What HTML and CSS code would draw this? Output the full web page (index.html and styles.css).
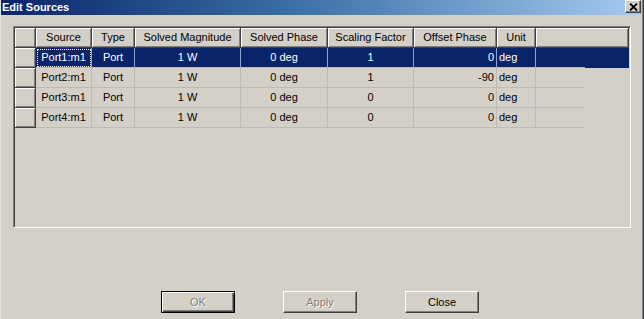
FILE: index.html
```html
<!DOCTYPE html>
<html lang="en">
<head>
    <meta charset="UTF-8">
    <title>Edit Sources</title>
    <link rel="stylesheet" href="styles.css">
</head>
<body>
<div class="window">
    <div class="titlebar">
        <span class="title">Edit Sources</span>
        <span class="close">
            <svg width="9" height="8" viewBox="0 0 9 8"><path d="M1 0.5L8 7.5M8 0.5L1 7.5" stroke="#000" stroke-width="1.8"/></svg>
        </span>
    </div>

    <div class="grid">
        <div class="sheet">
            <div class="row">
                <div class="hd"></div>
                <div class="hd">Source</div>
                <div class="hd">Type</div>
                <div class="hd">Solved Magnitude</div>
                <div class="hd">Solved Phase</div>
                <div class="hd">Scaling Factor</div>
                <div class="hd">Offset Phase</div>
                <div class="hd">Unit</div>
                <div class="hd fill"></div>
            </div>
            <div class="row selected">
                <div class="rh"></div>
                <div class="c focus">Port1:m1</div>
                <div class="c">Port</div>
                <div class="c">1 W</div>
                <div class="c">0 deg</div>
                <div class="c">1</div>
                <div class="c r">0</div>
                <div class="c l">deg</div>
                <div class="c x"></div>
                <div class="c e"></div>
            </div>
            <div class="row">
                <div class="rh"></div>
                <div class="c">Port2:m1</div>
                <div class="c">Port</div>
                <div class="c">1 W</div>
                <div class="c">0 deg</div>
                <div class="c">1</div>
                <div class="c r">-90</div>
                <div class="c l">deg</div>
                <div class="c x"></div>
                <div class="c e"></div>
            </div>
            <div class="row">
                <div class="rh"></div>
                <div class="c">Port3:m1</div>
                <div class="c">Port</div>
                <div class="c">1 W</div>
                <div class="c">0 deg</div>
                <div class="c">0</div>
                <div class="c r">0</div>
                <div class="c l">deg</div>
                <div class="c x"></div>
                <div class="c e"></div>
            </div>
            <div class="row">
                <div class="rh"></div>
                <div class="c">Port4:m1</div>
                <div class="c">Port</div>
                <div class="c">1 W</div>
                <div class="c">0 deg</div>
                <div class="c">0</div>
                <div class="c r">0</div>
                <div class="c l">deg</div>
                <div class="c x"></div>
                <div class="c e"></div>
            </div>
        </div>
    </div><!--grid end-->

    <div class="actions">
        <button class="btn default" disabled>OK</button>
        <button class="btn" disabled>Apply</button>
        <button class="btn">Close</button>
    </div>
</div>
</body>
</html>
```

FILE: styles.css
```css
*{
    margin: 0;
    padding: 0;
}
body{
    background-color: #d4d0c8;
    font-family: "Liberation Sans", Arial, sans-serif;
    font-size: 11px;
    color: #000;
}
.window{
    width: 644px;
    height: 319px;
    box-sizing: border-box;
    border-left: 1px solid #e4e2dc;
    box-shadow: inset -1px 0 #404040, inset -2px 0 #808080;
    overflow: hidden;
}
.titlebar{
    height: 15px;
    margin-right: 2px;
    padding: 0 1px 0 1px;
    display: flex;
    justify-content: space-between;
    align-items: flex-start;
    background: linear-gradient(to right, #0a246a, #3a6ea5 45%, #a6caf0);
}
.title{
    color: #fff;
    font-weight: bold;
    line-height: 15px;
}
.close{
    width: 16px;
    height: 13px;
    box-sizing: border-box;
    background-color: #d4d0c8;
    border: 1px solid;
    border-color: #fff #404040 #404040 #fff;
    box-shadow: inset -1px -1px #808080;
    display: flex;
    align-items: center;
    justify-content: center;
}
.grid{
    margin: 11px 0 0 12px;
    width: 618px;
    height: 202px;
    box-sizing: border-box;
    padding: 1px;
    border: 1px solid;
    border-color: #808080 #fff #fff #808080;
    box-shadow: inset 1px 1px #404040;
}
.sheet{
    display: grid;
    grid-template-columns: 21px 56px 43px 106px 87px 86px 83px 39px 49px 44px;
    grid-auto-rows: 20px;
}
.row{
    display: contents;
}
.hd, .rh{
    box-sizing: border-box;
    border-right: 1px solid #404040;
    border-bottom: 1px solid #404040;
    box-shadow: inset 1px 1px #fff, inset -1px -1px #808080;
    text-align: center;
    line-height: 19px;
    white-space: nowrap;
    overflow: hidden;
}
.hd.fill{
    grid-column: span 2;
}
.c{
    box-sizing: border-box;
    border-right: 1px solid #bfbbb3;
    border-bottom: 1px solid #bfbbb3;
    padding: 0 2px;
    text-align: center;
    line-height: 19px;
    white-space: nowrap;
    overflow: hidden;
}
.c.r{
    text-align: right;
}
.c.l{
    text-align: left;
}
.c.x{
    border-right: none;
}
.c.e{
    border: none;
}
.row.selected .c{
    background-color: #0a246a;
    color: #fff;
    border-right-color: #8fa3d6;
}
.row.selected .c.x{
    border-right: none;
}
.row.selected .focus{
    outline: 1px dotted #fffbe0;
    outline-offset: -2px;
}
.actions{
    display: flex;
    gap: 48px;
    margin-top: 63px;
    padding-left: 160px;
}
.btn{
    width: 74px;
    height: 22px;
    box-sizing: border-box;
    font-family: "Liberation Sans", Arial, sans-serif;
    font-size: 11px;
    color: #000;
    background-color: #d4d0c8;
    border: 1px solid;
    border-color: #fff #404040 #404040 #fff;
    box-shadow: inset -1px -1px #808080;
}
.btn.default{
    border-color: #000;
    box-shadow: inset 1px 1px #fff, inset -1px -1px #404040, inset -2px -2px #808080;
}
.btn:disabled{
    color: #808080;
    text-shadow: 1px 1px #fff;
}
```
